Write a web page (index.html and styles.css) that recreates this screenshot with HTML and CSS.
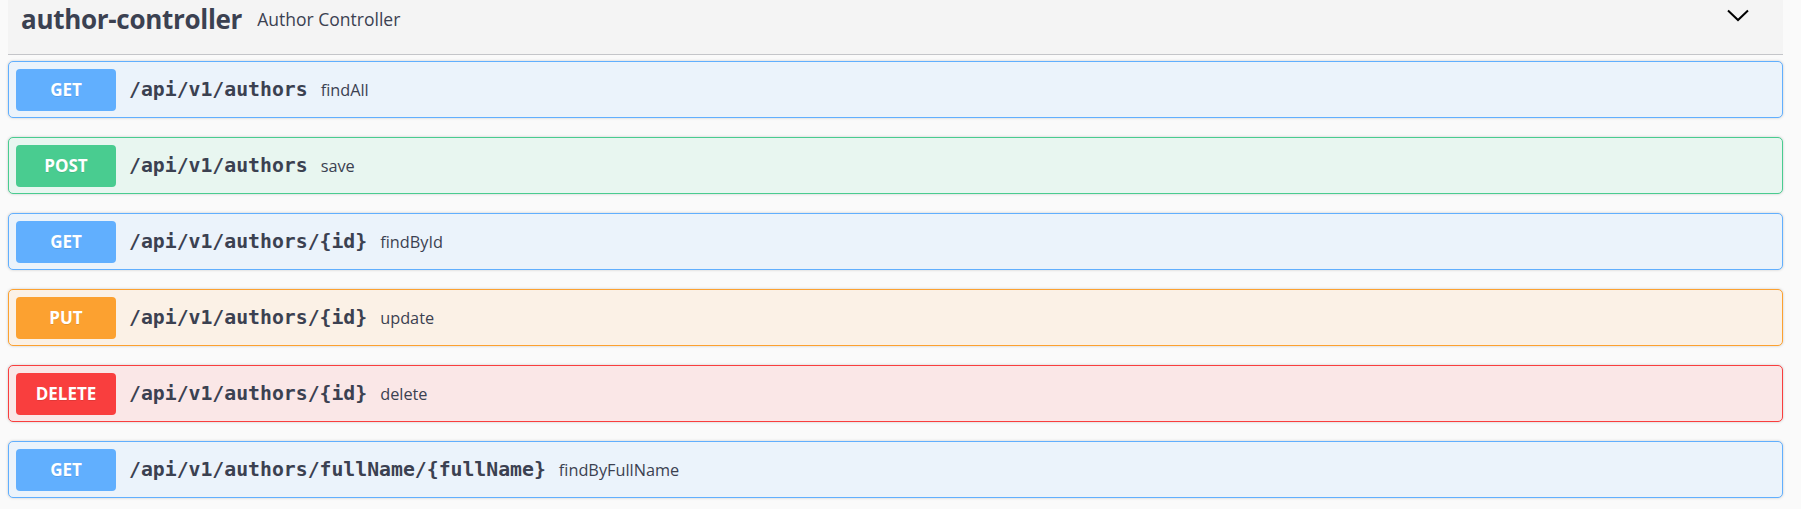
FILE: index.html
```html
<!DOCTYPE html>
<html>
<head>
<meta charset="utf-8">
<link rel="stylesheet" href="styles.css">
</head>
<body>
<div class="wrap">
  <div class="tag">
    <div class="tag-title">
      <span class="tag-name">author-controller</span>
      <small class="tag-desc">Author Controller</small>
    </div>
    <svg class="chev" width="22" height="13" viewBox="0 0 22 13"><path d="M1 1.5 L11 11 L21 1.5" fill="none" stroke="#000" stroke-width="2"/></svg>
  </div>
  <div class="ops">
    <div class="op get"><span class="method">GET</span><span class="path">/api/v1/authors</span><span class="summary">findAll</span></div>
    <div class="op post"><span class="method">POST</span><span class="path">/api/v1/authors</span><span class="summary">save</span></div>
    <div class="op get"><span class="method">GET</span><span class="path">/api/v1/authors/{id}</span><span class="summary">findById</span></div>
    <div class="op put"><span class="method">PUT</span><span class="path">/api/v1/authors/{id}</span><span class="summary">update</span></div>
    <div class="op delete"><span class="method">DELETE</span><span class="path">/api/v1/authors/{id}</span><span class="summary">delete</span></div>
    <div class="op get"><span class="method">GET</span><span class="path">/api/v1/authors/fullName/{fullName}</span><span class="summary">findByFullName</span></div>
  </div>
</div>
</body>
</html>
```
FILE: styles.css
```css
html, body {
  margin: 0;
  padding: 0;
  background: #fafafa;
  color: #3b4151;
  font-family: "Open Sans", sans-serif;
}
.wrap {
  padding: 0 18px 0 8px;
}
.tag {
  height: 54px;
  background: #f4f4f4;
  border-bottom: 1px solid #c4c5c9;
  display: flex;
  align-items: flex-start;
  justify-content: space-between;
  padding: 0 34px 0 13px;
}
.tag-title {
  padding-top: 1px;
  white-space: nowrap;
}
.tag-name {
  font-weight: 700;
  font-size: 26px;
  letter-spacing: -0.3px;
  color: #3b4151;
}
.tag-desc {
  font-size: 17.5px;
  margin-left: 11px;
  vertical-align: 3px;
  color: #3b4151;
}
.chev {
  margin-top: 9px;
}
.ops {
  padding-top: 6px;
}
.op {
  height: 55px;
  margin-bottom: 19px;
  border: 1px solid;
  border-radius: 5px;
  box-shadow: 0 0 3px rgba(0, 0, 0, 0.19);
  display: flex;
  align-items: center;
  padding: 0 7px;
}
.method {
  width: 100px;
  height: 42px;
  border-radius: 4px;
  color: #fff;
  font-weight: 700;
  font-size: 17px;
  display: flex;
  align-items: center;
  justify-content: center;
  text-shadow: 0 1px 0 rgba(0, 0, 0, 0.1);
}
.path {
  margin-left: 13px;
  font-family: "DejaVu Sans Mono", monospace;
  font-weight: 700;
  font-size: 19.8px;
  color: #3b4151;
}
.summary {
  margin-left: 13px;
  font-size: 16.3px;
  color: #3b4151;
}
.get { background: #ebf3fb; border-color: #61affe; }
.get .method { background: #61affe; }
.post { background: #e8f6f0; border-color: #49cc90; }
.post .method { background: #49cc90; }
.put { background: #fbf1e6; border-color: #fca130; }
.put .method { background: #fca130; }
.delete { background: #fae7e7; border-color: #f93e3e; }
.delete .method { background: #f93e3e; }
```
